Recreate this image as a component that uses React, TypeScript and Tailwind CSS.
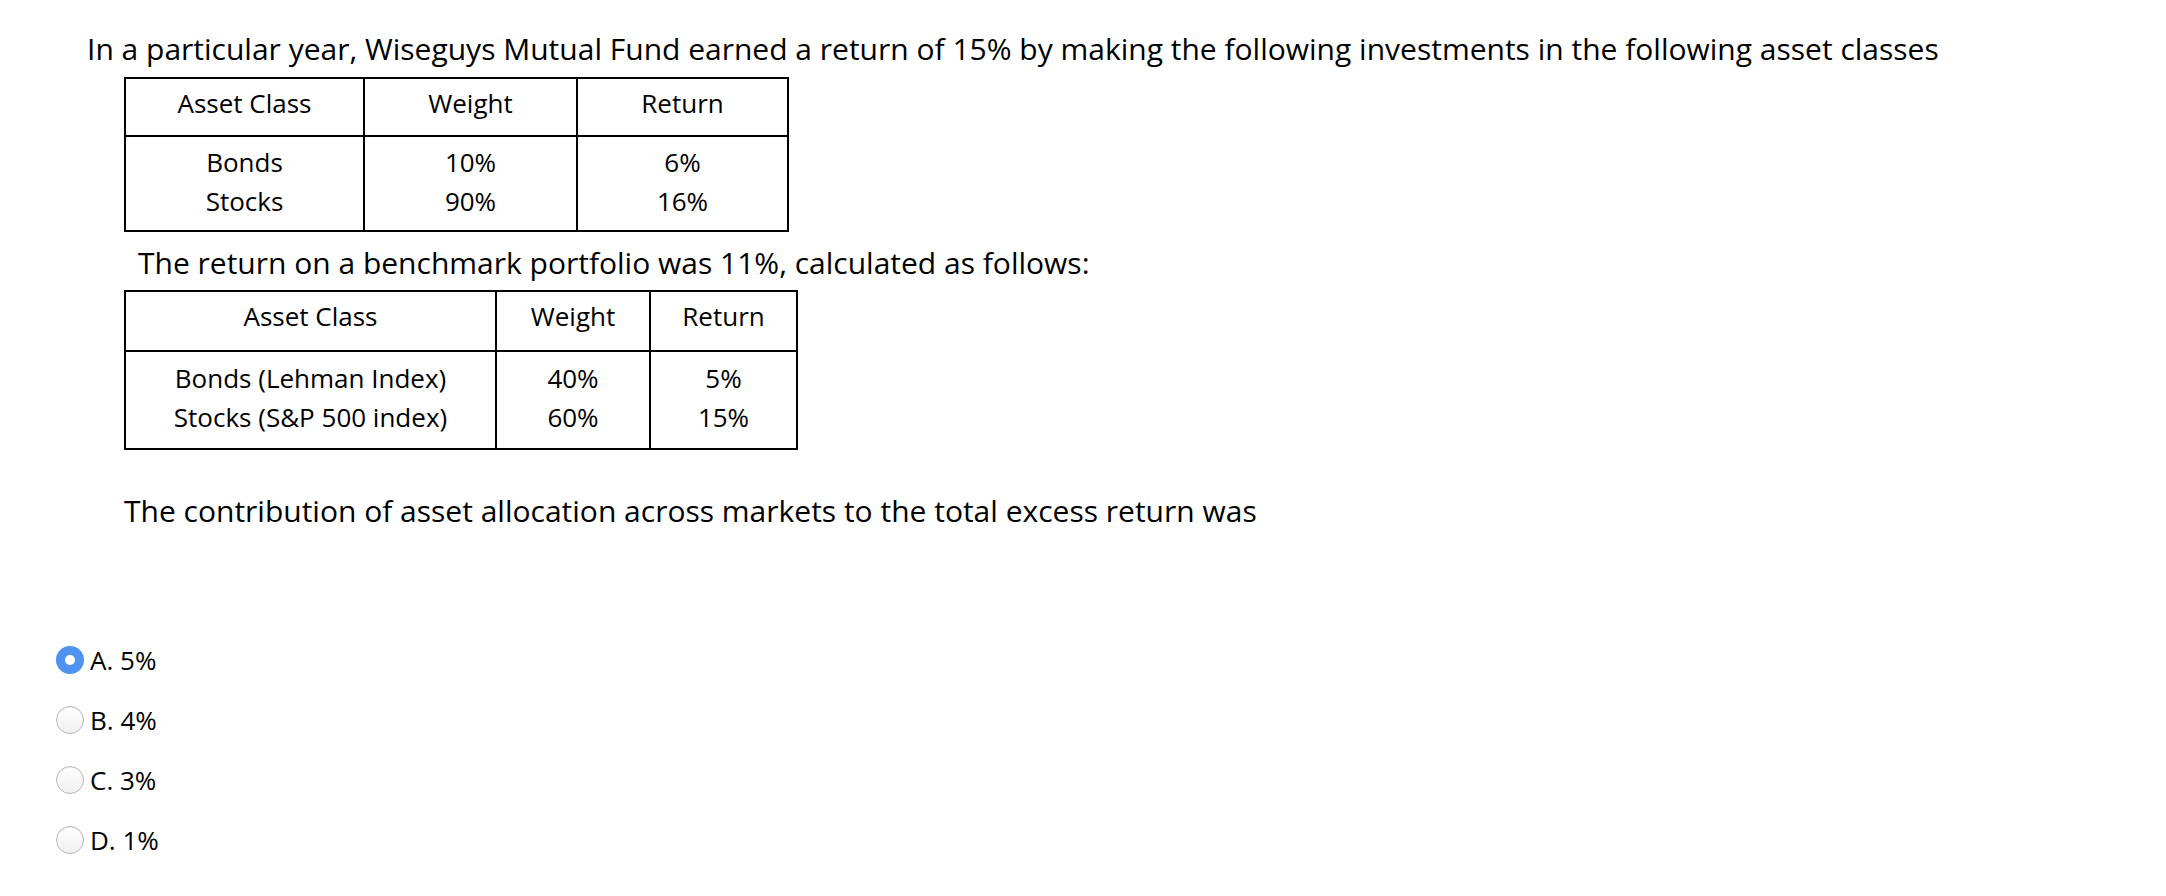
import React from "react";

type Row = { name: string; weight: string; ret: string };

const fundRows: Row[] = [
  { name: "Bonds", weight: "10%", ret: "6%" },
  { name: "Stocks", weight: "90%", ret: "16%" },
];

const benchRows: Row[] = [
  { name: "Bonds (Lehman Index)", weight: "40%", ret: "5%" },
  { name: "Stocks (S&P 500 index)", weight: "60%", ret: "15%" },
];

const options = ["A. 5%", "B. 4%", "C. 3%", "D. 1%"];

const DataTable = ({
  rows,
  cols,
  headH,
  rowH,
  pads,
}: {
  rows: Row[];
  cols: string[];
  headH: string;
  rowH: string[];
  pads: string[];
}) => (
  <table className="border-collapse border-2 border-black text-[26px] leading-[36px] text-black">
    <colgroup>
      {cols.map((c, i) => (
        <col key={i} className={c} />
      ))}
    </colgroup>
    <thead>
      <tr className={headH}>
        <th className="border-2 border-black font-normal text-center">Asset Class</th>
        <th className="border-2 border-black font-normal text-center">Weight</th>
        <th className="border-2 border-black font-normal text-center">Return</th>
      </tr>
    </thead>
    <tbody>
      {rows.map((r, i) => (
        <tr key={r.name} className={rowH[i]}>
          <td className={`border-x-2 border-black text-center ${pads[i]}`}>{r.name}</td>
          <td className={`border-x-2 border-black text-center ${pads[i]}`}>{r.weight}</td>
          <td className={`border-x-2 border-black text-center ${pads[i]}`}>{r.ret}</td>
        </tr>
      ))}
    </tbody>
  </table>
);

const Radio = ({ checked }: { checked: boolean }) =>
  checked ? (
    <span className="flex h-[28px] w-[28px] items-center justify-center rounded-full bg-[#4f93f0]">
      <span className="h-[10px] w-[10px] rounded-full bg-white" />
    </span>
  ) : (
    <span className="h-[28px] w-[28px] rounded-full border border-[#b8b8b8] bg-gradient-to-b from-white to-[#f0f0f0] shadow-[inset_0_1px_1px_rgba(0,0,0,0.06)]" />
  );

export default function App() {
  return (
    <div
      className="min-h-[896px] w-[2166px] bg-white text-black"
      style={{ fontFamily: '"Open Sans", "Noto Sans", sans-serif' }}
    >
      <div className="pt-[29px] pl-[87px] text-[30px] leading-[40px]">
        In a particular year, Wiseguys Mutual Fund earned a return of 15% by making the following
        investments in the following asset classes
      </div>

      <div className="mt-[8px] pl-[124px]">
        <DataTable
          rows={fundRows}
          cols={["w-[239px]", "w-[213px]", "w-[211px]"]}
          headH="h-[58px] [&>th]:pb-[8px]"
          rowH={["h-[47px]", "h-[47px]"]}
          pads={["pt-[4px]", "pb-[11px]"]}
        />
      </div>

      <div className="mt-[11px] pl-[138px] text-[30px] leading-[40px]">
        The return on a benchmark portfolio was 11%, calculated as follows:
      </div>

      <div className="mt-[7px] pl-[124px]">
        <DataTable
          rows={benchRows}
          cols={["w-[371px]", "w-[154px]", "w-[147px]"]}
          headH="h-[60px] [&>th]:pb-[10px]"
          rowH={["h-[48px]", "h-[50px]"]}
          pads={["pt-[5px]", "pb-[13px]"]}
        />
      </div>

      <div className="mt-[41px] pl-[124px] text-[30px] leading-[40px]">
        The contribution of asset allocation across markets to the total excess return was
      </div>

      <div className="mt-[115px] flex flex-col gap-[32px] pl-[56px]">
        {options.map((o, i) => (
          <label key={o} className="flex h-[28px] items-center gap-[6px] text-[26px]">
            <Radio checked={i === 0} />
            <span>{o}</span>
          </label>
        ))}
      </div>
    </div>
  );
}
